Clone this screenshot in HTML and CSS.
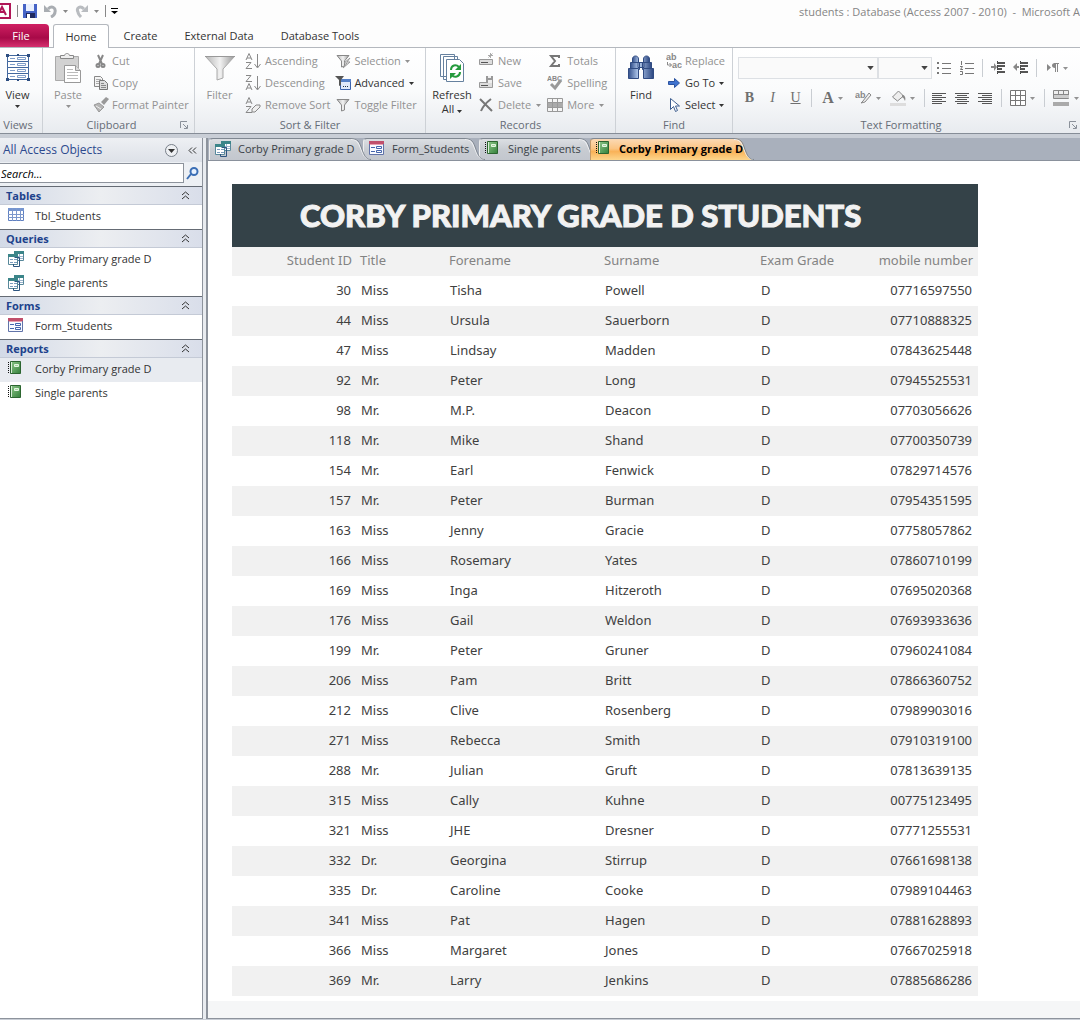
FILE: index.html
```html
<!DOCTYPE html>
<html lang="en">
<head>
<meta charset="utf-8">
<title>students : Database</title>
<link rel="stylesheet" href="styles.css">
</head>
<body>
<svg class="defs" aria-hidden="true">
  <defs>
    <linearGradient id="gtab" x1="0" y1="0" x2="0" y2="1"><stop offset="0" stop-color="#dcdfe3"/><stop offset=".5" stop-color="#c8ccd2"/><stop offset="1" stop-color="#c3c7ce"/></linearGradient>
    <linearGradient id="gact" x1="0" y1="0" x2="0" y2="1"><stop offset="0" stop-color="#fbd9b4"/><stop offset=".45" stop-color="#fbc584"/><stop offset=".6" stop-color="#f9b258"/><stop offset="1" stop-color="#fdd68c"/></linearGradient>
    <linearGradient id="ggrey" x1="0" y1="0" x2="1" y2="0"><stop offset="0" stop-color="#b5b5b5"/><stop offset=".5" stop-color="#f2f2f2"/><stop offset="1" stop-color="#999"/></linearGradient>
    <linearGradient id="gblue" x1="0" y1="0" x2="1" y2="0"><stop offset="0" stop-color="#33508c"/><stop offset=".4" stop-color="#b6cdf0"/><stop offset="1" stop-color="#2a4580"/></linearGradient>
    <linearGradient id="ggreen" x1="0" y1="0" x2="1" y2="1"><stop offset="0" stop-color="#8fc88a"/><stop offset="1" stop-color="#33803a"/></linearGradient>
  </defs>
  <symbol id="query" viewBox="0 0 16 16"><path fill="#fff" stroke="#58889a" d="M6.500 .500h9v9h-9z"/><path fill="#3b8589" d="M6 0h10v3H6z"/><path stroke="#9ab3cc" d="M8 5.500h7M8 7.500h7M11.500 3v6"/><path fill="#fff" stroke="#58889a" d="M.500 3.500h9v10h-9z"/><path fill="#3b8589" d="M0 3h10v3H0z"/><path stroke="#7b9cbd" d="M2 8.500h3M2 11.500h3M6 8.500h3M6 11.500h3"/><path fill="none" stroke="#2d5580" d="M5.500 15.500h6v-9h-5M5.500 13v2.500"/></symbol>
  <symbol id="form" viewBox="0 0 16 16"><path fill="#f8faff" stroke="#6173a8" d="M.5.5h14v13H.5z"/><path fill="#c0506c" d="M0 0h15v3H0z"/><path fill="#e8a0b0" d="M1 3h13v1H1z"/><path fill="none" stroke="#4565ad" d="M2 6.500h4M2 10.500h4M7.500 5.500h5v2h-5zM7.500 9.500h5v2h-5z"/></symbol>
  <symbol id="report" viewBox="0 0 16 16"><path fill="url(#ggreen)" stroke="#2c6530" d="M2.500.5h10v12h-10z"/><path stroke="#111" stroke-dasharray="1 1" d="M.5 1v12"/><path stroke="#d9eed8" d="M3.500 1v11"/><path fill="#a5d69f" stroke="#e5f5e3" d="M6.500 3.500h4v2h-4z"/></symbol>
  <symbol id="table" viewBox="0 0 16 16"><path fill="#fff" stroke="#5f7fc0" d="M.5.5h15v12H.5z"/><path fill="#7595d0" d="M0 0h16v3H0z"/><path stroke="#7d98cc" d="M0 6.500h16M0 9.500h16M4.500 0v13M8.500 0v13M12.500 0v13"/></symbol>
  <symbol id="up" viewBox="0 0 9 9"><path fill="none" stroke="#333" d="M1 4l3.500-3L8 4M1 8l3.500-3L8 8"/></symbol>
  <symbol id="drop" viewBox="0 0 5 3"><path fill="currentColor" d="M0 0h5L2.500 3z"/></symbol>
  <symbol id="launch" viewBox="0 0 8 8"><path fill="none" stroke="#8b919a" d="M.5 7V.5H7M3 3l4 4M7.500 4v3.500H4"/></symbol>
  <symbol id="funnel" viewBox="0 0 16 16"><path fill="url(#ggrey)" stroke="#888" d="M2 2.500h12L9.500 8v5l-3 1V8z"/></symbol>
  <symbol id="tail" viewBox="0 0 20 22"><path d="M0 0C9 0 9 7 12 14C14 19 16 22 20 22H0z"/><path fill="none" stroke="#f1f2f4" d="M0 1.500C7 1 8 7 11 14C13 19 15 21 19 21.500"/><path fill="none" stroke="#7f8791" d="M0 .5C9 .5 9 7 12 14C14 19 16 21.500 20 21.500"/></symbol>
</svg>

<header class="titlebar">
  <div class="quick">
    <svg width="11" height="16" viewBox="0 0 11 16"><path fill="#fff" stroke="#b01657" stroke-width="2" d="M-3 1H10v14H-3"/><path fill="none" stroke="#b01657" stroke-width="2" d="M-2 12L2 4l4 8M-1 9h6"/></svg>
    <span class="bar"></span>
    <button aria-label="Save"><svg width="14" height="14" viewBox="0 0 14 14"><path fill="#4563c6" d="M0 0h14v14H0z"/><path fill="#e9f0ff" d="M3 0h8v7H3z"/><path fill="#202a60" d="M3 9h9v5H3z"/><path fill="#fff" d="M4 10h3v4H4z"/></svg></button>
    <button class="undo" aria-label="Undo"><svg width="14" height="14" viewBox="0 0 14 14"><path fill="none" stroke="#a9adb2" stroke-width="3" d="M4 5c4-4 8-1 7 3c0 2-2 4-4 5"/><path fill="#a9adb2" d="M0 1v7h7z"/></svg><svg class="drop" width="5" height="3"><use href="#drop"/></svg></button>
    <button class="undo" aria-label="Redo"><svg width="14" height="14" viewBox="0 0 14 14"><path fill="none" stroke="#b9bcc0" stroke-width="3" d="M9 5C5 1 1 4 3 8c0 2 1 3 3 5"/><path fill="#b9bcc0" d="M13 1v7H6z"/></svg><svg class="drop" width="5" height="3"><use href="#drop"/></svg></button>
    <span class="bar"></span>
    <button aria-label="Customize toolbar"><svg width="7" height="6" viewBox="0 0 7 6"><path d="M0 0h7v1H0zM0 3h7L3.500 6z"/></svg></button>
  </div>
  <div class="caption">students : Database (Access 2007 - 2010)&nbsp; -&nbsp; Microsoft A</div>
</header>

<nav class="tabs">
  <button class="file">File</button>
  <button class="tab current">Home</button>
  <button class="tab create">Create</button>
  <button class="tab external">External Data</button>
  <button class="tab tools">Database Tools</button>
</nav>

<section class="ribbon">
  <div class="group views">
    <div class="body">
      <button class="big on"><svg width="26" height="30" viewBox="0 0 26 30"><g fill="#fff" stroke="#41679e"><path d="M2.500 2.500h21v6h-21zM2.500 8.500h21v6h-21zM2.500 14.500h21v6h-21zM2.500 20.500h21v6h-21z"/><path stroke="#7e9cc8" d="M12.500 4.500h8v2h-8zM12.500 10.500h8v2h-8zM12.500 16.500h8v2h-8zM12.500 22.500h8v2h-8zM5 5.500h5M5 11.500h5M5 17.500h5M5 23.500h5"/></g><path fill="#2d4d80" d="M1 1h3v3H1zM22 1h3v3h-3zM1 25h3v3H1zM22 25h3v3h-3zM12 1h2v2h-2zM12 26h2v2h-2z"/></svg><span>View</span><svg class="drop" width="5" height="3"><use href="#drop"/></svg></button>
    </div>
    <div class="label"><span>Views</span></div>
  </div>
  <div class="group clipboard">
    <div class="body">
      <button class="big"><svg width="28" height="30" viewBox="0 0 28 30"><path fill="#d2d2d2" stroke="#aaa" d="M1.500 3.500h23v24h-23z"/><path fill="#eee" stroke="#888" d="M6.500 5.500v-3h4c1-3 4-3 5 0h4v3z"/><path fill="#fff" stroke="#999" d="M10.500 12.500h11l5 5v12h-16z"/><path fill="#ddd" stroke="#999" d="M21.500 12.500v5h5"/><path stroke="#bbb" d="M13 16.500h6M13 19.500h11M13 22.500h11M13 25.500h11"/></svg><span>Paste</span><svg class="drop" width="5" height="3"><use href="#drop"/></svg></button>
      <div class="stack">
        <button><svg width="16" height="16" viewBox="0 0 16 16"><g fill="none" stroke="#888" stroke-width="2"><path d="M5 2l4 9M10 2L6 11"/><circle cx="5" cy="12.500" r="1.500"/><circle cx="10" cy="12.500" r="1.500"/></g></svg>Cut</button>
        <button><svg width="16" height="16" viewBox="0 0 16 16"><path fill="#f4f4f4" stroke="#888" d="M1.500 1.500h6l2 2v8h-8z"/><path stroke="#aaa" d="M3 4.500h5M3 6.500h5M3 8.500h5"/><path fill="#ddd" stroke="#777" d="M6.500 5.500h5l3 3v6h-8z"/><path stroke="#888" d="M8 8.500h3M8 10.500h5M8 12.500h5"/></svg>Copy</button>
        <button><svg width="16" height="16" viewBox="0 0 16 16"><path fill="#b5b5b5" stroke="#999" d="M1 8l5-2 5 4-5 5z"/><path fill="#999" d="M8 5l5-5 3 2-5 6z"/><path stroke="#eee" d="M3 9l5 3"/></svg>Format Painter</button>
      </div>
    </div>
    <div class="label"><span>Clipboard</span><button aria-label="Clipboard options"><svg width="8" height="8"><use href="#launch"/></svg></button></div>
  </div>
  <div class="group sort">
    <div class="body">
      <button class="big"><svg width="32" height="30" viewBox="0 0 32 30"><path fill="url(#ggrey)" stroke="#aaa" d="M1.500 3.500h29L19 16v9l-6 2V16z"/><path fill="#e9e9e9" stroke="#999" d="M1 3.500h30"/></svg><span>Filter</span></button>
      <div class="stack">
        <button><svg width="16" height="16" viewBox="0 0 16 16"><g fill="none" stroke="#888"><path d="M1 7L4 .5 7 7M2 5h4M1 9.500h5L1 15.500h6"/><path d="M12.500 1v13M9.500 11l3 4 3-4"/></g></svg>Ascending</button>
        <button><svg width="16" height="16" viewBox="0 0 16 16"><g fill="none" stroke="#888"><path d="M1 .5h5L1 6.500h6M1 15l3-6.500L7 15M2 13h4"/><path d="M12.500 1v13M9.500 11l3 4 3-4"/></g></svg>Descending</button>
        <button><svg width="16" height="16" viewBox="0 0 16 16"><g fill="none" stroke="#888"><path d="M1 7L4 .5 7 7M2 5h4M1 9.500h5L1 15.500h6"/><path fill="#eee" d="M7 12l4-4h4v2l-5 5H7z"/></g></svg>Remove Sort</button>
      </div>
      <div class="stack second">
        <button><svg width="16" height="16"><use href="#funnel"/><path fill="#eee" stroke="#999" d="M15 5l-6 5h3l-4 5 7-6h-3z"/></svg>Selection<svg class="drop" width="5" height="3"><use href="#drop"/></svg></button>
        <button class="on"><svg width="16" height="16" viewBox="0 0 16 16"><path fill="#dfe9fb" stroke="#3b63ae" d="M5.500 4.500h10v10h-10z"/><path fill="#5580c8" d="M5 4h11v3H5z"/><path fill="#555" d="M0 1h9L6 5v5l-2 1V5z"/><path fill="#234" d="M8 11h1v1H8zM10 11h1v1h-1zM12 11h1v1h-1z"/></svg>Advanced<svg class="drop" width="5" height="3"><use href="#drop"/></svg></button>
        <button><svg width="16" height="16"><use href="#funnel"/></svg>Toggle Filter</button>
      </div>
    </div>
    <div class="label"><span>Sort &amp; Filter</span></div>
  </div>
  <div class="group records">
    <div class="body">
      <button class="big on"><svg width="26" height="30" viewBox="0 0 26 30"><g fill="#fff" stroke="#66819f"><path d="M1.500 1.500h14v22h-14zM4.500 3.500h14v23h-14z"/><path d="M7.500 6.500h13l4 4v18h-17z"/></g><g fill="none" stroke="#259b3d" stroke-width="2"><path d="M12 17c0-5 5-6 8-3M21 19c0 5-6 6-8 3"/></g><path fill="#259b3d" d="M22 11v6h-6zM11 26v-6h6z"/></svg><span>Refresh</span><span>All <svg class="drop" width="5" height="3"><use href="#drop"/></svg></span></button>
      <div class="stack">
        <button><svg width="16" height="16" viewBox="0 0 16 16"><path fill="#ddd" stroke="#999" d="M1.500 6.500h13v5h-13z"/><path stroke="#555" d="M3 9.500h7"/><path stroke="#aaa" d="M10.500 4.500l4-4M12.500 0v5M10 2.500h5"/></svg>New</button>
        <button><svg width="16" height="16" viewBox="0 0 16 16"><path fill="#ddd" stroke="#999" d="M1.500 7.500h13v5h-13z"/><path stroke="#555" d="M3 10.500h7"/><path fill="#999" d="M8 1h7v7H8z"/><path fill="#eee" d="M10 1h3v2h-3zM10 5h4v3h-4z"/></svg>Save</button>
        <button><svg width="16" height="16" viewBox="0 0 16 16"><path fill="none" stroke="#777" stroke-width="2" d="M2 2l12 12M13 2C9 5 5 9 3 14"/></svg>Delete<svg class="drop" width="5" height="3"><use href="#drop"/></svg></button>
      </div>
      <div class="stack third">
        <button><svg width="16" height="16" viewBox="0 0 16 16"><path fill="none" stroke="#777" stroke-width="2" d="M12 5V3H4l4 5-4 5h8v-2"/></svg>Totals</button>
        <button><svg width="16" height="16" viewBox="0 0 16 16"><text x="0" y="6" class="abc">ABC</text><path fill="none" stroke="#999" stroke-width="3" d="M4 9l4 4 6-8"/></svg>Spelling</button>
        <button><svg width="16" height="16" viewBox="0 0 16 16"><path fill="#f5f5f5" stroke="#999" d="M.5 1.500h15v13H.5z"/><path fill="#aaa" d="M1 6h15v4H1z"/><path stroke="#999" d="M0 5.500h16M0 10.500h16M5.500 1v14M10.500 1v14"/></svg>More<svg class="drop" width="5" height="3"><use href="#drop"/></svg></button>
      </div>
    </div>
    <div class="label"><span>Records</span></div>
  </div>
  <div class="group find">
    <div class="body">
      <button class="big on"><svg width="28" height="30" viewBox="0 0 28 30"><g fill="url(#gblue)" stroke="#304b82"><path d="M5.500 6c0-4 6-4 6 0v5h-6zM16.500 6c0-4 6-4 6 0v5h-6z"/><path d="M3.500 9.500h9v7h-9zM15.500 9.500h9v7h-9zM11 9.500h6v5h-6z"/><path d="M1.500 15.500h10v10h-10zM16.500 15.500h10v10h-10z"/></g></svg><span>Find</span></button>
      <div class="stack">
        <button><svg width="16" height="16" viewBox="0 0 16 16"><text x="0" y="7" class="ab">ab</text><text x="6" y="15" class="ab">ac</text><path fill="none" stroke="#888" d="M1.500 9v3h4M3.500 10l2 2-2 2"/></svg>Replace</button>
        <button class="on"><svg width="16" height="16" viewBox="0 0 16 16"><path fill="#3f73cf" stroke="#2c53a0" d="M2.500 6.500h6v-3l5 4.500-5 4.500v-3h-6z"/></svg>Go To<svg class="drop" width="5" height="3"><use href="#drop"/></svg></button>
        <button class="on"><svg width="16" height="16" viewBox="0 0 16 16"><path fill="#fff" stroke="#3f5f90" d="M4.500 1.500v11l3-3 2 5 2-1-2-4.500h4z"/></svg>Select<svg class="drop" width="5" height="3"><use href="#drop"/></svg></button>
      </div>
    </div>
    <div class="label"><span>Find</span></div>
  </div>
  <div class="group format">
    <div class="body">
      <div class="line">
        <span class="combo wide"><select aria-label="Font"><option></option></select><svg width="7" height="4" viewBox="0 0 5 3"><use href="#drop"/></svg></span>
        <span class="combo"><select aria-label="Font size"><option></option></select><svg width="7" height="4" viewBox="0 0 5 3"><use href="#drop"/></svg></span>
        <button aria-label="Bullets"><svg width="14" height="14" viewBox="0 0 14 14"><path stroke="#777" d="M5 2.500h9M5 7.500h9M5 12.500h9"/><path fill="#777" d="M0 1h2v2H0zM0 6h2v2H0zM0 11h2v2H0z"/></svg></button>
        <button aria-label="Numbering"><svg width="14" height="14" viewBox="0 0 14 14"><path fill="none" stroke="#777" d="M5 2.500h9M5 7.500h9M5 12.500h9M1.500 0v4M0 5.500h2.500L.5 8.500H3M0 10.500h2.500v3H0"/></svg></button>
        <span class="bar"></span>
        <button aria-label="Decrease indent"><svg width="16" height="14" viewBox="0 0 16 14"><path stroke="#555" stroke-width="2" d="M7 2h8M7 5h8M7 8h5M7 11h8"/><path fill="#888" d="M1 5h3V2l3 4-3 4V7H1z"/><path stroke="#444" stroke-dasharray="1 1" d="M7.500 0v14"/></svg></button>
        <button aria-label="Increase indent"><svg width="16" height="14" viewBox="0 0 16 14"><path stroke="#555" stroke-width="2" d="M7 2h8M7 5h8M7 8h5M7 11h8"/><path fill="#888" d="M6 5H4V2L0 6l4 4V7h2z"/><path stroke="#444" stroke-dasharray="1 1" d="M7.500 0v14"/></svg></button>
        <span class="bar"></span>
        <button class="split" aria-label="Text direction"><svg width="12" height="10" viewBox="0 0 12 10"><path fill="#888" d="M0 1l4 3.500L0 8zM8 0C4 0 4 5 8 5z"/><path fill="none" stroke="#888" d="M7 .5h5M8.500 0v9M10.500 0v9"/></svg><svg class="drop" width="5" height="3"><use href="#drop"/></svg></button>
      </div>
      <div class="line">
        <button class="letter"><b>B</b></button>
        <button class="letter"><i>I</i></button>
        <button class="letter"><u>U</u></button>
        <span class="bar"></span>
        <button class="split letter large"><b>A</b><svg class="drop" width="5" height="3"><use href="#drop"/></svg></button>
        <button class="split" aria-label="Highlight"><svg width="17" height="16" viewBox="0 0 17 16"><text x="0" y="8" class="ab">ab</text><path fill="#eee" stroke="#888" d="M8 11l6-8 2 2-6 7-4 1z"/></svg><svg class="drop" width="5" height="3"><use href="#drop"/></svg></button>
        <button class="split" aria-label="Fill color"><svg width="16" height="16" viewBox="0 0 16 16"><path fill="#eee" stroke="#888" d="M2.500 7l6-6 5 5-6 5z"/><path fill="#888" d="M12 5c3 0 4 3 3 6-1-2-1-3-3-4z"/><path fill="#ddd" d="M0 13h16v3H0z"/></svg><svg class="drop" width="5" height="3"><use href="#drop"/></svg></button>
        <span class="bar"></span>
        <button aria-label="Align left"><svg width="15" height="11" viewBox="0 0 15 11"><path stroke="#555" d="M0 .5h14M0 2.500h10M0 4.500h14M0 6.500h10M0 8.500h14M0 10.500h10"/></svg></button>
        <button aria-label="Center"><svg width="15" height="11" viewBox="0 0 15 11"><path stroke="#555" d="M0 .5h14M2 2.500h10M0 4.500h14M2 6.500h10M0 8.500h14M2 10.500h10"/></svg></button>
        <button aria-label="Align right"><svg width="15" height="11" viewBox="0 0 15 11"><path stroke="#555" d="M0 .5h14M4 2.500h10M0 4.500h14M4 6.500h10M0 8.500h14M4 10.500h10"/></svg></button>
        <span class="bar"></span>
        <button class="split" aria-label="Gridlines"><svg width="16" height="16" viewBox="0 0 16 16"><path fill="#fff" stroke="#777" d="M.5.5h15v15H.5zM0 5.500h16M0 10.500h16M5.500 0v16M10.500 0v16"/></svg><svg class="drop" width="5" height="3"><use href="#drop"/></svg></button>
        <span class="bar"></span>
        <button class="split" aria-label="Alternate row color"><svg width="17" height="16" viewBox="0 0 17 16"><path fill="#eee" stroke="#888" d="M.5.5h15v8H.5zM0 4.500h16M5.500 0v8M10.500 0v8"/><path fill="#ccc" d="M1 5h15v3H1z"/><path fill="#aaa" d="M0 12h16v4H0z"/></svg><svg class="drop" width="5" height="3"><use href="#drop"/></svg></button>
      </div>
    </div>
    <div class="label"><span>Text Formatting</span><button aria-label="Text formatting options"><svg width="8" height="8"><use href="#launch"/></svg></button></div>
  </div>
</section>

<div class="workspace">
  <aside class="pane">
    <div class="panehead">
      <h2>All Access Objects</h2>
      <button aria-label="Choose category"><svg width="13" height="13" viewBox="0 0 13 13"><circle cx="6.500" cy="6.500" r="6" fill="#eef0f3" stroke="#777e88"/><path fill="#333" d="M3 5h7L6.500 9z"/></svg></button>
      <button aria-label="Collapse pane"><svg width="9" height="7" viewBox="0 0 9 7"><path fill="none" stroke="#333" d="M4 .5l-3 3 3 3M8 .5l-3 3 3 3"/></svg></button>
    </div>
    <div class="search">
      <input type="text" aria-label="Search" placeholder="Search...">
      <button aria-label="Go"><svg width="13" height="13" viewBox="0 0 13 13"><circle cx="8" cy="4.500" r="3.500" fill="#e8f2ff" stroke="#3c6fb5" stroke-width="2"/><path stroke="#3c6fb5" stroke-width="2" d="M5 7L1 12"/></svg></button>
    </div>
    <h3><span>Tables</span><svg width="9" height="9"><use href="#up"/></svg></h3>
    <a href="#"><svg width="16" height="16"><use href="#table"/></svg>Tbl_Students</a>
    <h3><span>Queries</span><svg width="9" height="9"><use href="#up"/></svg></h3>
    <a href="#"><svg width="16" height="16"><use href="#query"/></svg>Corby Primary grade D</a>
    <a href="#"><svg width="16" height="16"><use href="#query"/></svg>Single parents</a>
    <h3><span>Forms</span><svg width="9" height="9"><use href="#up"/></svg></h3>
    <a href="#"><svg width="16" height="16"><use href="#form"/></svg>Form_Students</a>
    <h3><span>Reports</span><svg width="9" height="9"><use href="#up"/></svg></h3>
    <a href="#" class="picked"><svg width="16" height="16"><use href="#report"/></svg>Corby Primary grade D</a>
    <a href="#"><svg width="16" height="16"><use href="#report"/></svg>Single parents</a>
  </aside>
  <div class="split-bar"></div>
  <main class="doc">
    <div class="doctabs">
      <button class="t1"><svg width="16" height="16"><use href="#query"/></svg><span>Corby Primary grade D</span><svg class="tail" width="20" height="22" fill="url(#gtab)"><use href="#tail"/></svg></button>
      <button class="t2"><svg width="16" height="16"><use href="#form"/></svg><span>Form_Students</span><svg class="tail" width="20" height="22" fill="url(#gtab)"><use href="#tail"/></svg></button>
      <button class="t3"><svg width="16" height="16"><use href="#report"/></svg><span>Single parents</span><svg class="tail" width="20" height="22" fill="url(#gtab)"><use href="#tail"/></svg></button>
      <button class="t4 active"><svg width="16" height="16"><use href="#report"/></svg><span>Corby Primary grade D</span><svg class="tail" width="20" height="22" fill="url(#gact)"><use href="#tail"/></svg></button>
    </div>
    <div class="sheet">
      <h1>CORBY PRIMARY GRADE D STUDENTS</h1>
      <table>
        <colgroup><col class="c-id"><col class="c-title"><col class="c-name"><col class="c-surname"><col class="c-grade"><col></colgroup>
        <thead><tr><th>Student ID</th><th>Title</th><th>Forename</th><th>Surname</th><th>Exam Grade</th><th>mobile number</th></tr></thead>
        <tbody>
          <tr><td>30</td><td>Miss</td><td>Tisha</td><td>Powell</td><td>D</td><td>07716597550</td></tr>
          <tr><td>44</td><td>Miss</td><td>Ursula</td><td>Sauerborn</td><td>D</td><td>07710888325</td></tr>
          <tr><td>47</td><td>Miss</td><td>Lindsay</td><td>Madden</td><td>D</td><td>07843625448</td></tr>
          <tr><td>92</td><td>Mr.</td><td>Peter</td><td>Long</td><td>D</td><td>07945525531</td></tr>
          <tr><td>98</td><td>Mr.</td><td>M.P.</td><td>Deacon</td><td>D</td><td>07703056626</td></tr>
          <tr><td>118</td><td>Mr.</td><td>Mike</td><td>Shand</td><td>D</td><td>07700350739</td></tr>
          <tr><td>154</td><td>Mr.</td><td>Earl</td><td>Fenwick</td><td>D</td><td>07829714576</td></tr>
          <tr><td>157</td><td>Mr.</td><td>Peter</td><td>Burman</td><td>D</td><td>07954351595</td></tr>
          <tr><td>163</td><td>Miss</td><td>Jenny</td><td>Gracie</td><td>D</td><td>07758057862</td></tr>
          <tr><td>166</td><td>Miss</td><td>Rosemary</td><td>Yates</td><td>D</td><td>07860710199</td></tr>
          <tr><td>169</td><td>Miss</td><td>Inga</td><td>Hitzeroth</td><td>D</td><td>07695020368</td></tr>
          <tr><td>176</td><td>Miss</td><td>Gail</td><td>Weldon</td><td>D</td><td>07693933636</td></tr>
          <tr><td>199</td><td>Mr.</td><td>Peter</td><td>Gruner</td><td>D</td><td>07960241084</td></tr>
          <tr><td>206</td><td>Miss</td><td>Pam</td><td>Britt</td><td>D</td><td>07866360752</td></tr>
          <tr><td>212</td><td>Miss</td><td>Clive</td><td>Rosenberg</td><td>D</td><td>07989903016</td></tr>
          <tr><td>271</td><td>Miss</td><td>Rebecca</td><td>Smith</td><td>D</td><td>07910319100</td></tr>
          <tr><td>288</td><td>Mr.</td><td>Julian</td><td>Gruft</td><td>D</td><td>07813639135</td></tr>
          <tr><td>315</td><td>Miss</td><td>Cally</td><td>Kuhne</td><td>D</td><td>00775123495</td></tr>
          <tr><td>321</td><td>Miss</td><td>JHE</td><td>Dresner</td><td>D</td><td>07771255531</td></tr>
          <tr><td>332</td><td>Dr.</td><td>Georgina</td><td>Stirrup</td><td>D</td><td>07661698138</td></tr>
          <tr><td>335</td><td>Dr.</td><td>Caroline</td><td>Cooke</td><td>D</td><td>07989104463</td></tr>
          <tr><td>341</td><td>Miss</td><td>Pat</td><td>Hagen</td><td>D</td><td>07881628893</td></tr>
          <tr><td>366</td><td>Miss</td><td>Margaret</td><td>Jones</td><td>D</td><td>07667025918</td></tr>
          <tr><td>369</td><td>Mr.</td><td>Larry</td><td>Jenkins</td><td>D</td><td>07885686286</td></tr>
        </tbody>
      </table>
    </div>
    <div class="docfoot"></div>
  </main>
</div>
</body>
</html>
```

FILE: styles.css
```css
* { box-sizing: border-box; }
body {
  margin: 0;
  min-height: 100vh;
  display: flex;
  flex-direction: column;
  overflow-x: hidden;
  background: #fdfdfd;
  color: #333;
  font: 11px/16px "Open Sans", "Noto Sans", sans-serif;
}
.defs { position: absolute; width: 0; height: 0; }
button {
  margin: 0;
  padding: 0;
  border: 0;
  background: none;
  color: inherit;
  font: inherit;
  display: flex;
  align-items: center;
  white-space: nowrap;
}
svg { flex: none; }
.bar { flex: none; width: 8px; height: 18px; background: linear-gradient(#c9cdd2, #c9cdd2) center / 1px 100% no-repeat; }

/* title bar */
.titlebar { display: flex; align-items: center; justify-content: space-between; height: 24px; overflow: hidden; }
.quick { display: flex; align-items: center; gap: 2px; padding-bottom: 2px; color: #888; }
.quick .bar { height: 12px; background-image: linear-gradient(#888, #888); }
.quick .undo { gap: 5px; margin-left: 5px; }
.caption { color: #858585; font-size: 11px; white-space: nowrap; }

/* ribbon tabs */
.tabs { display: flex; height: 24px; border-bottom: 1px solid #b4b8be; font-size: 11px; }
.tabs button { justify-content: center; }
.tabs .file { width: 49px; padding-right: 7px; color: #fff; background: linear-gradient(#cf1f62, #a80a48 60%, #d6306f); border-radius: 0 4px 0 0; }
.current { width: 56px; height: 24px; margin-left: 4px; border: 1px solid #b4b8be; border-bottom: 0; border-radius: 3px 3px 0 0; background: #fff; }
.create { width: 63px; }
.external { width: 94px; }
.tools { width: 108px; }

/* ribbon */
.ribbon { display: flex; height: 86px; background: linear-gradient(#fff, #fafbfc 50%, #e8ebef); border-bottom: 1px solid #868d97; }
.group { flex: none; display: flex; flex-direction: column; padding-top: 2px; border-right: 1px solid #cdd1d6; }
.body { display: flex; height: 66px; color: #929292; }
.on { color: #333; }
.label { display: flex; align-items: center; height: 17px; color: #666c76; }
.label span { flex: 1; text-align: center; }
.label button { width: 14px; }
.big { flex-direction: column; padding-top: 3px; line-height: 14px; }
.big > svg:first-child { margin-bottom: 5px; }
.big > .drop { margin-top: 3px; }
.stack { display: flex; flex-direction: column; }
.stack button { height: 22px; gap: 4px; }
.stack .drop { margin-left: 1px; }
.views { width: 43px; }
.views .big { width: 35px; }
.views .label { padding-right: 6px; }
.clipboard { width: 152px; }
.clipboard .big { width: 50px; }
.clipboard .stack button { gap: 3px; }
.sort { width: 231px; }
.sort .big { width: 49px; margin-right: 1px; }
.second { margin-left: 5px; }
.second button { gap: 3px; }
.records { width: 190px; }
.records .big { width: 52px; }
.third { margin-left: 6px; }
.find { width: 117px; }
.find .big { width: 50px; }
.find .stack button { gap: 3px; }
.format { flex: 1 0 347px; border-right: 0; }
.format .body { flex-direction: column; padding: 6px 0 0 5px; gap: 6px; }
.line { display: flex; align-items: center; height: 24px; }
.line button { width: 23px; height: 22px; justify-content: center; }
.line .split { width: 35px; gap: 4px; }
.letter { font: 14px/16px "Liberation Serif", serif; }
.letter b, .letter i, .letter u { color: #6f6f6f; }
.letter.large { font-size: 16px; }
.combo { display: grid; width: 54px; height: 22px; align-items: center; color: #444; }
.combo.wide { width: 140px; }
.combo select { grid-area: 1 / 1; width: 100%; height: 22px; appearance: none; border: 1px solid #dde0e4; border-radius: 0; background: #fafafa; }
.combo svg { grid-area: 1 / 1; justify-self: end; margin-right: 4px; pointer-events: none; }
.abc { font: bold 7px "Liberation Sans", sans-serif; fill: #888; }
.ab { font: bold 9px "Liberation Sans", sans-serif; fill: #888; }

/* workspace */
.workspace { flex: 1; display: flex; padding: 4px 0 1px; background: #c9ced6; border-bottom: 1px solid #fff; }
.pane { flex: none; width: 203px; background: #fff; border-right: 1px solid #8d939c; border-bottom: 1px solid #8d939c; }
.panehead { display: flex; align-items: center; height: 24px; padding: 0 5px 0 3px; gap: 10px; background: linear-gradient(#eef0f4, #dde1e8); }
.panehead h2 { flex: 1; margin: 0; color: #2d4a8e; font-size: 12px; font-weight: 400; }
.search { display: flex; align-items: center; gap: 2px; height: 24px; padding-bottom: 2px; background: #edf0f4; }
.search input { width: 184px; height: 20px; padding: 0 1px; border: 1px solid #8d939c; border-left: 0; font: inherit; font-style: italic; }
.search input::placeholder { color: #000; opacity: 1; }
.pane h3 { display: flex; align-items: center; justify-content: space-between; height: 19px; margin: 0; padding: 0 12px 0 6px; border-top: 1px solid #656b74; border-bottom: 1px solid #c4cad6; background: linear-gradient(90deg, #d3dae7, #eceef1 50%, #d9deea); color: #20428c; font-size: 11px; }
.pane a { display: flex; align-items: center; gap: 11px; height: 24px; padding: 0 0 2px 8px; color: #333; text-decoration: none; }
.pane .picked { background: #e8ebf0; }
.split-bar { flex: none; width: 5px; background: #e9ecf0; border-right: 2px solid #8d939c; }

/* open documents */
.doc { flex: 1; min-width: 0; display: flex; flex-direction: column; background: #fff; border-bottom: 1px solid #8d939c; }
.doctabs { display: flex; height: 23px; padding-left: 1px; background: #a9b0bc; border-bottom: 1px solid #8a919c; }
.doctabs button { position: relative; height: 22px; padding: 0 0 2px 5px; color: #3a3f46; border-top: 1px solid #7f8791; border-left: 1px solid #eee; border-radius: 4px 0 0 0; background: linear-gradient(#dcdfe3, #c8ccd2 50%, #c3c7ce); }
.doctabs span { position: relative; z-index: 2; margin-left: 7px; }
.doctabs .tail { position: absolute; left: 100%; top: -1px; z-index: 1; }
.t1 { width: 142px; }
.t2 { width: 102px; margin-left: 12px; }
.t3 { width: 100px; margin-left: 14px; }
.doctabs .active { z-index: 2; width: 144px; margin-left: 11px; color: #000; font-weight: 700; border-left-color: #c49a68; background: linear-gradient(#fbd9b4, #fbc584 45%, #f9b258 60%, #fdd68c); }

/* report */
.sheet { flex: 1; padding: 23px 24px 5px; }
.sheet h1 { max-width: 746px; margin: 0; padding-left: 68px; background: #344248; color: #f2f2f2; font: 900 31px/63px Lato, sans-serif; -webkit-text-stroke: 1px #f2f2f2; white-space: nowrap; }
table { width: 100%; max-width: 746px; table-layout: fixed; border-collapse: collapse; color: #404040; font: 13px/18px "Noto Sans", sans-serif; }
.c-id { width: 124px; }
.c-title { width: 89px; }
.c-name { width: 155px; }
.c-surname { width: 156px; }
.c-grade { width: 100px; }
th, td { height: 30px; padding: 0 5px 2px; text-align: left; }
th { height: 29px; padding: 0 4px 3px; font-weight: 400; color: #838383; background: #f2f2f2; }
th:first-child, td:first-child, th:last-child, td:last-child { text-align: right; }
th:last-child { padding-right: 5px; }
td:last-child { padding-right: 6px; }
tbody tr:nth-child(even) { background: #f1f1f1; }
.docfoot { height: 17px; background: #f5f6f7; }
```
